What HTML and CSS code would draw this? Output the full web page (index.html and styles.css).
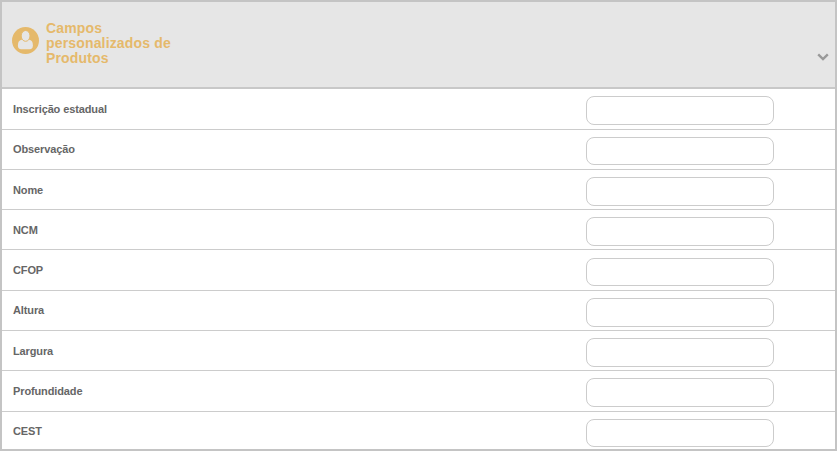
FILE: index.html
```html
<!DOCTYPE html>
<html lang="pt-BR">
<head>
    <meta charset="UTF-8">
    <meta name="viewport" content="width=device-width, initial-scale=1.0">
    <title>Campos personalizados de Produtos</title>
    <link rel="stylesheet" href="styles.css">
</head>
<body>
    <div class="panel">
        <div class="header">
            <svg class="user-icon" viewBox="0 0 27 27">
                <circle cx="13.5" cy="13.5" r="13.5" fill="#e5b96b"/>
                <path d="M9.4 12.8 H17.6 Q20.9 13.6 20.9 18.4 Q20.9 22.2 17.6 22.2 H9.2 Q5.9 22.2 5.9 18.4 Q5.9 13.6 9.4 12.8 Z" fill="#e6e6e6"/>
                <ellipse cx="13.6" cy="8.9" rx="4.4" ry="5.4" fill="#e6e6e6" stroke="#e5b96b" stroke-width="1"/>
            </svg>
            <h1>Campos personalizados de Produtos</h1>
            <svg class="chevron" viewBox="0 0 12 8">
                <path d="M1.2 1.4 L6 6 L10.8 1.4" fill="none" stroke="#999" stroke-width="2.4"/>
            </svg>
        </div>
        <div class="row">
            <label for="inscricao">Inscrição estadual</label>
            <input type="text" id="inscricao">
        </div>
        <div class="row">
            <label for="observacao">Observação</label>
            <input type="text" id="observacao">
        </div>
        <div class="row">
            <label for="nome">Nome</label>
            <input type="text" id="nome">
        </div>
        <div class="row">
            <label for="ncm">NCM</label>
            <input type="text" id="ncm">
        </div>
        <div class="row">
            <label for="cfop">CFOP</label>
            <input type="text" id="cfop">
        </div>
        <div class="row">
            <label for="altura">Altura</label>
            <input type="text" id="altura">
        </div>
        <div class="row">
            <label for="largura">Largura</label>
            <input type="text" id="largura">
        </div>
        <div class="row">
            <label for="profundidade">Profundidade</label>
            <input type="text" id="profundidade">
        </div>
        <div class="row">
            <label for="cest">CEST</label>
            <input type="text" id="cest">
        </div>
    </div>
</body>
</html>
```
FILE: styles.css
```css
* {
    box-sizing: border-box;
}
body {
    margin: 0;
    font-family: Arial, "Liberation Sans", sans-serif;
    background-color: #fff;
    overflow: hidden;
}
.panel {
    height: 451px;
    border: 2px solid #c4c4c4;
    overflow: hidden;
}
.header {
    display: flex;
    align-items: flex-start;
    height: 87.25px;
    padding: 19px 6px 0 10px;
    background-color: #e6e6e6;
    border-bottom: 2px solid #c8c8c8;
}
.user-icon {
    width: 27px;
    height: 27px;
    margin-top: 6px;
}
.header h1 {
    width: 140px;
    margin: 0 0 0 7px;
    font-size: 14px;
    line-height: 15px;
    letter-spacing: 0.16px;
    color: #e5b96b;
}
.chevron {
    width: 12px;
    height: 8px;
    margin: 32px 0 0 auto;
}
.row {
    display: flex;
    justify-content: space-between;
    height: 40.3px;
    padding: 7.1px 61px 0 11px;
    border-bottom: 1px solid #ccc;
}
.row:last-child {
    border-bottom: none;
}
.row label {
    padding-top: 6.63px;
    font-size: 11px;
    font-weight: bold;
    line-height: 13px;
    letter-spacing: -0.12px;
    color: #666;
}
.row input {
    width: 188px;
    height: 28.75px;
    padding: 0 8px;
    font-size: 11px;
    background-color: #fff;
    border: 1px solid #ccc;
    border-radius: 8px;
    outline: none;
}
```
